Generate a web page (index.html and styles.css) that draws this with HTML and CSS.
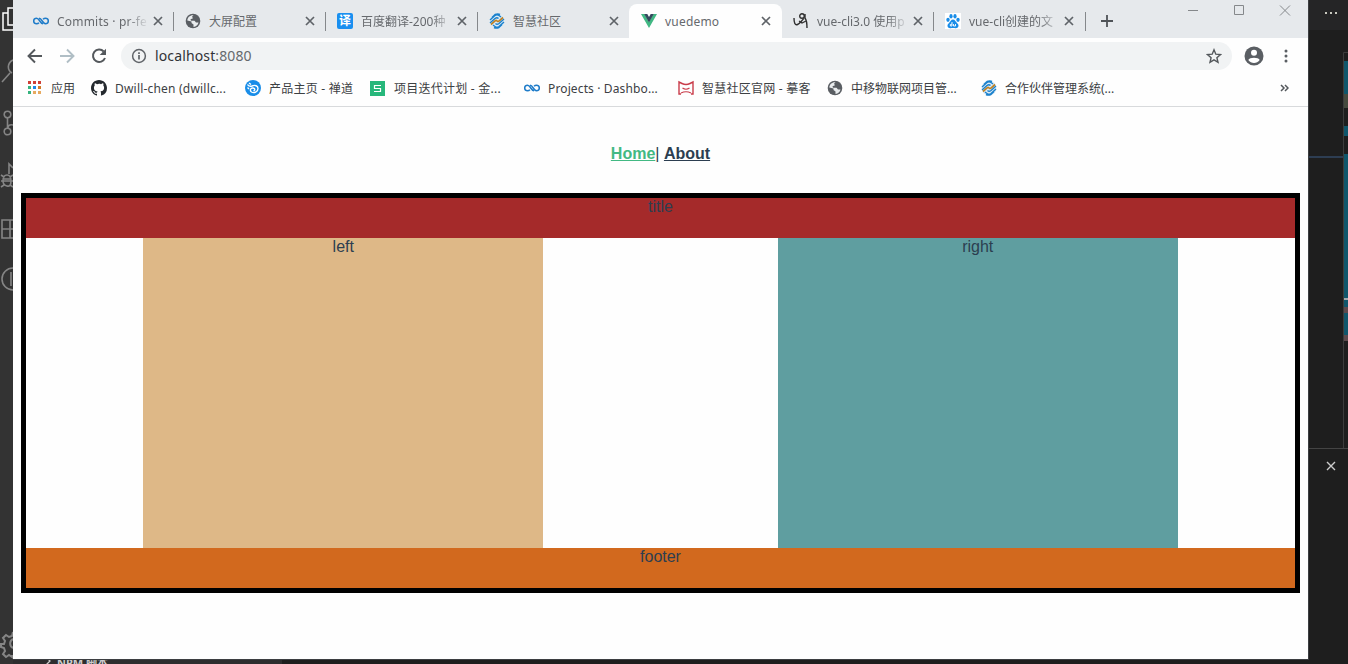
FILE: index.html
```html
<!DOCTYPE html>
<html lang="zh-CN">
<head>
<meta charset="utf-8">
<title>vuedemo</title>
<link rel="stylesheet" href="styles.css">
</head>
<body>
<svg class="defs" width="0" height="0">
  <symbol id="close" viewBox="0 0 10 10"><path d="M1 1l8 8M9 1l-8 8" fill="none" stroke="#5f6368" stroke-width="1.7"/></symbol>
  <symbol id="loop" viewBox="0 0 16 16"><path d="M6 9.800C5 10.800 4.200 10.800 3.500 10.800a2.800 2.800 0 0 1 0-5.600C6.500 5.200 7 10.800 10 10.800M10 6.200c1-1 1.800-1 2.500-1a2.800 2.800 0 0 1 0 5.600C9.500 10.800 9 5.200 6 5.200" fill="none" stroke="#1f7cc9" stroke-width="1.500"/></symbol>
  <symbol id="globe" viewBox="0 0 16 16"><circle cx="8" cy="8" r="7.300" fill="#5a5e63"/><path d="M8.500 2.300L7 3.800l1 1.500-2.500 1 .5 1.500h3.500l1.500 1.700h2.500c-.5 2.500-2.500 4.300-5 4.500v-2.500L6.500 10V8.500L2.300 7.500C2.500 4.500 5 2 8.500 2.300z" fill="#e9ecee"/><path d="M9.500 2.500l3.800 3-1.800 1.700-2-1z" fill="#5a5e63"/></symbol>
  <symbol id="mobile" viewBox="0 0 16 16"><circle cx="8" cy="8" r="7.500" fill="#dcebf5"/><g fill="none" stroke="#1a80cc" stroke-width="1.400"><path d="M1 7l5-4.500q2-1.500 4 0l2 1.500M3 4.500l3-3q3-1 5 0M15 9l-5 4.500q-2 1.500-4 0L4 12M13 11.500l-3 3q-3 1-5 0M1 10l5-4.500q2-1.500 3.500 0M15 6l-5 4.500q-2 1.500-3.500 0"/></g><path d="M2 11.500l4-3.500q1-1 2 0t2 0l4-3.500" fill="none" stroke="#bd8126" stroke-width="1.700"/></symbol>
</svg>
<div class="desktop">
  <aside class="activity">
    <svg width="13" height="664" viewBox="0 0 13 664" fill="none" stroke="#858585" stroke-width="1.600">
      <path d="M8 13H3v17h10M13 8H8v17h5" stroke="#fff" stroke-width="1.500"/>
      <path d="M2 82l8-9M13 60c-6 3-6 10-1 13"/>
      <circle cx="7.500" cy="114.500" r="3.300"/><circle cx="7.500" cy="131.500" r="3.300"/><path d="M7.500 118v10M13 125q-5-1-5 3"/>
      <path d="M9 174v-10l4 4"/><path d="M3 181q0-6 4-6t4 6-4 5-4-5M1 181h12M1 175l3 2M1 187l3-2M4 179h7M13 175l-3 2M13 187l-3-2"/>
      <path d="M13 220H2v18h11M2 229h11M10 220v18"/>
      <path d="M13 268a11 11 0 0 0 0 22M11 272v14"/>
      <path d="M13 632l-1 4-3 1-3-2-3 3 2 3-1 3H1v3l3 1 1 3-2 3 3 3 3-2 3 2v-2M13 639a5 5 0 0 0 0 9" stroke-width="2"/>
    </svg>
  </aside>
  <main class="browser">
    <header class="tabs">
      <div class="tab"><svg class="ico"><use href="#loop"/></svg><span class="label latin fade">Commits · pr-fe</span><svg class="x"><use href="#close"/></svg></div>
      <div class="tab"><svg class="ico"><use href="#globe"/></svg><span class="label">大屏配置</span><svg class="x"><use href="#close"/></svg></div>
      <div class="tab"><span class="ico translate">译</span><span class="label fade">百度翻译-200种</span><svg class="x"><use href="#close"/></svg></div>
      <div class="tab plain"><svg class="ico"><use href="#mobile"/></svg><span class="label">智慧社区</span><svg class="x"><use href="#close"/></svg></div>
      <div class="tab active"><svg class="ico" viewBox="0 0 16 16"><path d="M0 1h3.500L8 9l4.500-8H16L8 15z" fill="#41b883"/><path d="M3.200 1H6.300L8 4l1.700-3h3.100L8 9.500z" fill="#35495e"/></svg><span class="label latin">vuedemo</span><svg class="x"><use href="#close"/></svg></div>
      <div class="tab"><svg class="ico" viewBox="0 0 16 16" fill="none" stroke="#303030" stroke-width="1.400"><path d="M1 5c0 5 1 7.500 3.500 6.500S9 7 11 5.500M14 15c0-4-.5-8-2-10V1"/><circle cx="9" cy="3" r="2.300"/><path d="M6 8l3 2 4-2" stroke-width="1.200"/></svg><span class="label fade">vue-cli3.0 使用p</span><svg class="x"><use href="#close"/></svg></div>
      <div class="tab"><svg class="ico" viewBox="0 0 16 16"><path d="M0 0h16v16H0z" fill="#fff"/><g fill="#198de8"><ellipse cx="3" cy="6.800" rx="1.700" ry="2.100"/><ellipse cx="6" cy="3.300" rx="1.600" ry="2.200"/><ellipse cx="10" cy="3.300" rx="1.600" ry="2.200"/><ellipse cx="13" cy="6.800" rx="1.700" ry="2.100"/><path d="M8 6.500c2 0 2.500 2 4 3.500 3 2.500 1 5.500-1.500 5.200-2-.3-3-.3-5 0C3 15.500 1 12.500 4 10c1.500-1.500 2-3.500 4-3.500z"/></g><path d="M7 9v4H5.500q-1.500-1.500 1.500-2M8.500 11v2h2v-2" fill="none" stroke="#fff" stroke-width=".9"/></svg><span class="label fade">vue-cli创建的文</span><svg class="x last"><use href="#close"/></svg></div>
      <svg class="newtab" viewBox="0 0 12 12"><path d="M6 0v12M0 6h12" stroke="#4f5357" stroke-width="1.800"/></svg>
      <svg class="winctl" width="104" height="12" viewBox="0 0 104 12" fill="none" stroke="#85888b"><path d="M1 6.500h10M93 1.500l10 10M103 1.500l-10 10"/><path d="M47.500 1.500h9v9h-9z"/></svg>
    </header>
    <div class="toolbar">
      <svg class="nav-ico" viewBox="0 0 16 16"><path d="M15 8H2M8 1.500L1.500 8 8 14.500" fill="none" stroke="#54585c" stroke-width="1.900"/></svg>
      <svg class="nav-ico" viewBox="0 0 16 16"><path d="M1 8h13M8 1.500L14.500 8 8 14.500" fill="none" stroke="#b0bec5" stroke-width="1.900"/></svg>
      <svg class="nav-ico" viewBox="0 0 16 16"><path d="M12.700 3.500A6.200 6.200 0 1 0 14 10" fill="none" stroke="#54585c" stroke-width="2"/><path d="M15 .700V7H8.700z" fill="#54585c"/></svg>
      <div class="omnibox">
        <svg width="16" height="16" viewBox="0 0 16 16"><circle cx="8" cy="8" r="6.400" fill="none" stroke="#5f6368" stroke-width="1.500"/><path d="M8 7v4.500M8 4.300v1.600" stroke="#5f6368" stroke-width="1.700"/></svg>
        <span class="url">localhost<span class="port">:8080</span></span>
        <svg class="star" viewBox="0 0 16 16"><path d="M8 1.800l1.800 4.400 4.700.4-3.600 3.100 1.100 4.600-4-2.500-4 2.500 1.100-4.600L1.500 6.600l4.700-.4z" fill="none" stroke="#54585c" stroke-width="1.400"/></svg>
      </div>
      <svg class="avatar" viewBox="0 0 20 20"><circle cx="10" cy="10" r="9.500" fill="#5a5e63"/><circle cx="10" cy="6.700" r="3" fill="#fff"/><path d="M4.300 14c1-3 10.400-3 11.400 0-2.700 4-8.700 4-11.400 0z" fill="#fff"/></svg>
      <svg class="more" viewBox="0 0 4 14" fill="#5a5e63"><circle cx="2" cy="2" r="1.500"/><circle cx="2" cy="7" r="1.500"/><circle cx="2" cy="12" r="1.500"/></svg>
    </div>
    <div class="bookmarks">
      <div class="bm apps"><svg class="ico" viewBox="0 0 16 16"><path d="M1 1h3v3H1zM6 1h3v3H6zM11 1h3v3h-3z" fill="#cf3f35"/><path d="M1 6h3v3H1zM1 11h3v3H1z" fill="#35b37e"/><path d="M6 6h3v3H6z" fill="#1e88e5"/><path d="M11 6h3v3h-3z" fill="#d17a27"/><path d="M6 11h3v3H6zM11 11h3v3h-3z" fill="#e7aa60"/></svg><span>应用</span></div>
      <div class="bm wide"><svg class="ico" viewBox="0 0 16 16"><path fill="#24292e" d="M8 0C3.580 0 0 3.580 0 8c0 3.540 2.290 6.530 5.470 7.590.4.070.55-.17.55-.38 0-.19-.01-.82-.01-1.490-2.010.37-2.530-.49-2.690-.94-.09-.23-.48-.94-.82-1.130-.28-.15-.68-.52-.01-.53.63-.01 1.080.58 1.230.82.72 1.210 1.870.87 2.330.66.07-.52.28-.87.51-1.070-1.780-.2-3.640-.89-3.640-3.950 0-.87.31-1.590.82-2.150-.08-.2-.36-1.020.08-2.120 0 0 .67-.21 2.200.82A7.700 7.700 0 0 1 8 3.860c.68 0 1.360.09 2 .27 1.530-1.040 2.200-.82 2.200-.82.44 1.100.16 1.920.08 2.120.51.56.82 1.270.82 2.150 0 3.070-1.870 3.750-3.650 3.950.29.25.54.73.54 1.480 0 1.070-.01 1.930-.01 2.200 0 .21.15.46.55.38A8 8 0 0 0 16 8c0-4.420-3.580-8-8-8z"/></svg><span class="latin">Dwill-chen (dwillc...</span></div>
      <div class="bm mid"><svg class="ico" viewBox="0 0 16 16"><circle cx="8" cy="8" r="8" fill="#198de8"/><path d="M2.500 4.500c1 2 2.500 2 4.500 1.500 3-1.500 6 0 6 2.500 0 3.500-4 5-6.500 3.500-2-1.500-1-4.500 1.500-4s2 2.500.5 3M4 3l2 1.500M2.500 7.500L4 9" fill="none" stroke="#fff" stroke-width="1.400"/></svg><span class="zh">产品主页 - 禅道</span></div>
      <div class="bm wide"><svg class="ico" viewBox="0 0 16 16"><path d="M0 1h15v15H0z" fill="#27b77b"/><path d="M11 5.500H4.500v3h6v3H4" fill="none" stroke="#fff" stroke-width="1.200"/></svg><span class="zh">项目迭代计划 - 金...</span></div>
      <div class="bm wide"><svg class="ico"><use href="#loop"/></svg><span class="proj">Projects · Dashbo...</span></div>
      <div class="bm official"><svg class="ico" viewBox="0 0 16 16" fill="none" stroke="#c93c4a"><path d="M3 14H1V2l3 1.500q4 2 8 0L15 2v12h-2" stroke-width="1.400"/><path d="M3 13q5-2.500 10 0M4.500 8q3.500 2.500 7 0" stroke-width="1.200"/></svg><span class="zh">智慧社区官网 - 摹客</span></div>
      <div class="bm wide"><svg class="ico"><use href="#globe"/></svg><span>中移物联网项目管...</span></div>
      <div class="bm wide"><svg class="ico"><use href="#mobile"/></svg><span>合作伙伴管理系统(...</span></div>
      <svg class="overflow" viewBox="0 0 9 8"><path d="M1 1l3 3-3 3M5 1l3 3-3 3" fill="none" stroke="#54585c" stroke-width="1.500"/></svg>
    </div>
    <section class="page">
      <nav><a class="current">Home</a>| <a>About</a></nav>
      <div class="box">
        <div class="title">title</div>
        <div class="middle"><div class="left">left</div><div class="right">right</div></div>
        <div class="footer">footer</div>
      </div>
    </section>
  </main>
  <aside class="editor">
    <div class="editor-top">
      <svg width="14" height="3" viewBox="0 0 14 3" fill="#c9c9bf"><path d="M1 0h2v2H1zM6 0h2v2H6zM11 0h2v2h-2z"/></svg>
    </div>
    <div class="editor-body">
      <div class="code"></div>
      <svg class="minimap" width="5" height="396" viewBox="0 0 5 396"><path d="M.500 396V.500H5" fill="none" stroke="#3c3c3c"/><path d="M1 9h4v33H1zM1 74h4v10H1zM1 102h4v187H1z" fill="#10566b"/><path d="M1 42h4v14H1z" fill="#464a3e"/><path d="M1 246h4v2H1z" fill="#a0aaae"/><path d="M1 255h4v6H1zM1 283h4v6H1z" fill="#5c4a4d"/></svg>
    </div>
    <div class="panel"><svg width="10" height="10" viewBox="0 0 10 10"><path d="M1 1l8 8M9 1l-8 8" stroke="#ccc" stroke-width="1.400"/></svg></div>
  </aside>
  <div class="bottom"><div class="sidebar"><svg width="5" height="8" viewBox="0 0 5 8"><path d="M0 0l4 4-4 4" fill="none" stroke="#ccc" stroke-width="1.300"/></svg><span>NPM 脚本</span></div></div>
</div>
</body>
</html>
```
FILE: styles.css
```css
* { box-sizing: border-box; }
body { margin: 0; overflow: hidden; background: #1e1e1e; font: 12px "Noto Sans", "Noto Sans CJK SC", sans-serif; }
svg { display: block; flex: none; }
.defs { position: absolute; }
.desktop { display: grid; grid-template: 660px 4px / 13px 1296px 39px; width: 1348px; height: 664px; overflow: hidden; }
.activity { grid-row: 1 / 3; background: #333; overflow: hidden; }
.browser { display: flex; flex-direction: column; background: #fefefe; border-right: 1px solid #3c3e41; border-bottom: 1px solid #3c3e41; min-width: 0; }

.tabs { display: flex; height: 38px; padding: 4px 0 0 9px; background: #e6e9ec; color: #66696d; }
.tab { display: flex; align-items: center; flex: none; width: 152px; height: 34px; padding: 0 11px; background: linear-gradient(#85888b, #85888b) right 0 top 8px / 1px 19px no-repeat; }
.plain { width: 151px; padding-right: 10px; background: none; }
.active { width: 153px; padding-left: 12px; background: #fefefe; border-radius: 8px 8px 0 0; }
.active + .tab { border-bottom-left-radius: 8px; }
.ico { display: block; width: 16px; height: 16px; flex: none; margin-right: 8px; }
.label { flex: none; white-space: nowrap; line-height: 18px; padding-top: 2px; margin-right: auto; }
.latin { letter-spacing: 0.2px; }
.zh { letter-spacing: 0.25px; }
.proj { letter-spacing: 0.13px; }
.fade { -webkit-mask-image: linear-gradient(90deg, #000 70px, transparent 92px); mask-image: linear-gradient(90deg, #000 70px, transparent 92px); }
.x { width: 10px; height: 10px; }
.last { margin-right: 1px; }
.translate { background: #198ff0; border-radius: 2px; color: #fff; font-weight: bold; line-height: 15px; text-align: center; }
.newtab { width: 12px; height: 12px; margin: 11px 0 0 15px; }
.winctl { margin: 0 17px 0 auto; }

.toolbar { display: flex; align-items: center; height: 36px; padding-left: 14px; }
.nav-ico { width: 16px; height: 16px; margin-right: 16px; }
.omnibox { display: flex; align-items: center; width: 1111px; height: 28px; margin-left: -2px; padding: 0 10px; border-radius: 14px; background: #f1f3f4; }
.url { margin-left: 8px; font-size: 14px; letter-spacing: 0.13px; line-height: 20px; color: #303236; }
.port { color: #65696d; }
.star { width: 16px; height: 16px; margin-left: auto; }
.avatar { width: 20px; height: 20px; margin-left: 12px; }
.more { width: 4px; height: 14px; margin-left: 20px; }

.bookmarks { display: flex; align-items: center; height: 33px; padding: 0 19px 4px 14px; border-bottom: 1px solid #d8dadc; color: #3c4043; white-space: nowrap; }
.bm { display: flex; align-items: center; flex: none; }
.bm span { line-height: 18px; padding-top: 2px; }
.apps { width: 64px; }
.wide { width: 154px; }
.mid { width: 125px; }
.official { width: 149px; }
.bm .latin { letter-spacing: 0.2px; }
.overflow { width: 9px; height: 8px; margin-left: auto; }

.page { padding: 38px 8px 0; font: 16px/18px "Liberation Sans", Arial, sans-serif; color: #2c3e50; text-align: center; }
nav { height: 48px; }
nav a { font-weight: bold; text-decoration: underline; }
.current { color: #42b983; }
.box { height: 400px; border: 5px solid #000; }
.title { height: 40px; background: #a52a2a; }
.middle { display: flex; justify-content: space-around; height: 310px; }
.left, .right { width: 400px; }
.left { background: #deb887; }
.right { background: #5f9ea0; }
.footer { height: 40px; background: #d2691e; }

.editor { grid-column: 3; grid-row: 1 / 3; display: flex; flex-direction: column; background: #1e1e1e; }
.editor-top { height: 30px; padding: 12px 0 0 15px; background: #252526; }
.editor-body { display: flex; height: 418px; padding-top: 22px; }
.code { width: 34px; height: 106px; border-bottom: 2px solid #2d3d52; }
.panel { flex: 1; border-top: 1px solid #444; padding: 12px 0 0 17px; }
.bottom { grid-column: 2; grid-row: 2; overflow: hidden; }
.sidebar { display: flex; align-items: flex-start; width: 269px; height: 4px; padding-left: 33px; background: #2d2d2e; color: #ccc; font-weight: bold; font-size: 11px; overflow: hidden; }
.sidebar svg { margin-top: -3px; }
.sidebar span { margin: -5px 0 0 6px; line-height: 16px; }
```
